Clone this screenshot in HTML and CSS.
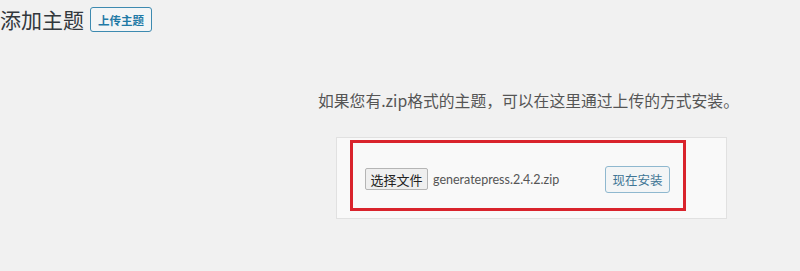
FILE: index.html
```html
<!DOCTYPE html>
<html>
<head>
    <meta charset="UTF-8">
    <title>添加主题</title>
    <link rel="stylesheet" href="styles.css">
</head>
<body>
    <div class="page-header">
        <h1>添加主题</h1>
        <button class="upload-btn">上传主题</button>
    </div>

    <div class="upload-theme">
        <p class="install-help">如果您有.zip格式的主题，可以在这里通过上传的方式安装。</p>
        <div class="upload-panel">
            <form class="upload-form">
                <button type="button" class="file-btn">选择文件</button>
                <span class="file-name">generatepress.2.4.2.zip</span>
                <button type="button" class="install-btn">现在安装</button>
            </form>
        </div>
    </div>
</body>
</html>
```

FILE: styles.css
```css
body {
    margin: 0;
    background: #f1f1f1;
    color: #444;
    font-family: "Noto Sans CJK SC", "Open Sans", sans-serif;
}

.page-header {
    display: flex;
    align-items: center;
    height: 39px;
}

.page-header h1 {
    margin: 0;
    font-size: 21px;
    font-weight: 400;
    line-height: 39px;
    color: #32373c;
}

.upload-btn {
    margin-left: 6px;
    width: 62px;
    height: 25px;
    padding: 0;
    font-family: "Noto Sans CJK SC", sans-serif;
    font-size: 11.5px;
    font-weight: 700;
    color: #1f7aa6;
    background: #f3f5f6;
    border: 1px solid #3d8ab0;
    border-radius: 3px;
}

.upload-theme {
    margin-left: 318px;
    width: 440px;
}

.install-help {
    margin: 52px 0 0 0;
    font-size: 15.8px;
    line-height: 20px;
    color: #555;
    white-space: nowrap;
}

.upload-panel {
    margin: 26px 0 0 18px;
    width: 389px;
    height: 80px;
    background: #f9f9f9;
    border: 1px solid #e1e1e1;
}

.upload-form {
    display: flex;
    align-items: center;
    box-sizing: border-box;
    margin: 2px 0 0 13px;
    width: 336px;
    height: 71px;
    padding: 7px 13px 0 12px;
    border: 3px solid #d9232c;
}

.file-btn {
    height: 22px;
    width: 63px;
    padding: 0;
    font-family: "Noto Sans CJK SC", sans-serif;
    font-size: 13px;
    color: #222;
    background: #efefef;
    border: 1px solid #b5b5b5;
    border-radius: 2px;
}

.file-name {
    margin-left: 5px;
    font-family: Lato, sans-serif;
    font-size: 12.5px;
    color: #555;
}

.install-btn {
    margin-left: auto;
    width: 65px;
    height: 27px;
    padding: 0;
    font-family: "Noto Sans CJK SC", sans-serif;
    font-size: 12.5px;
    color: #3f7595;
    background: #f3f5f6;
    border: 1px solid #8fb8cf;
    border-radius: 3px;
}
```
